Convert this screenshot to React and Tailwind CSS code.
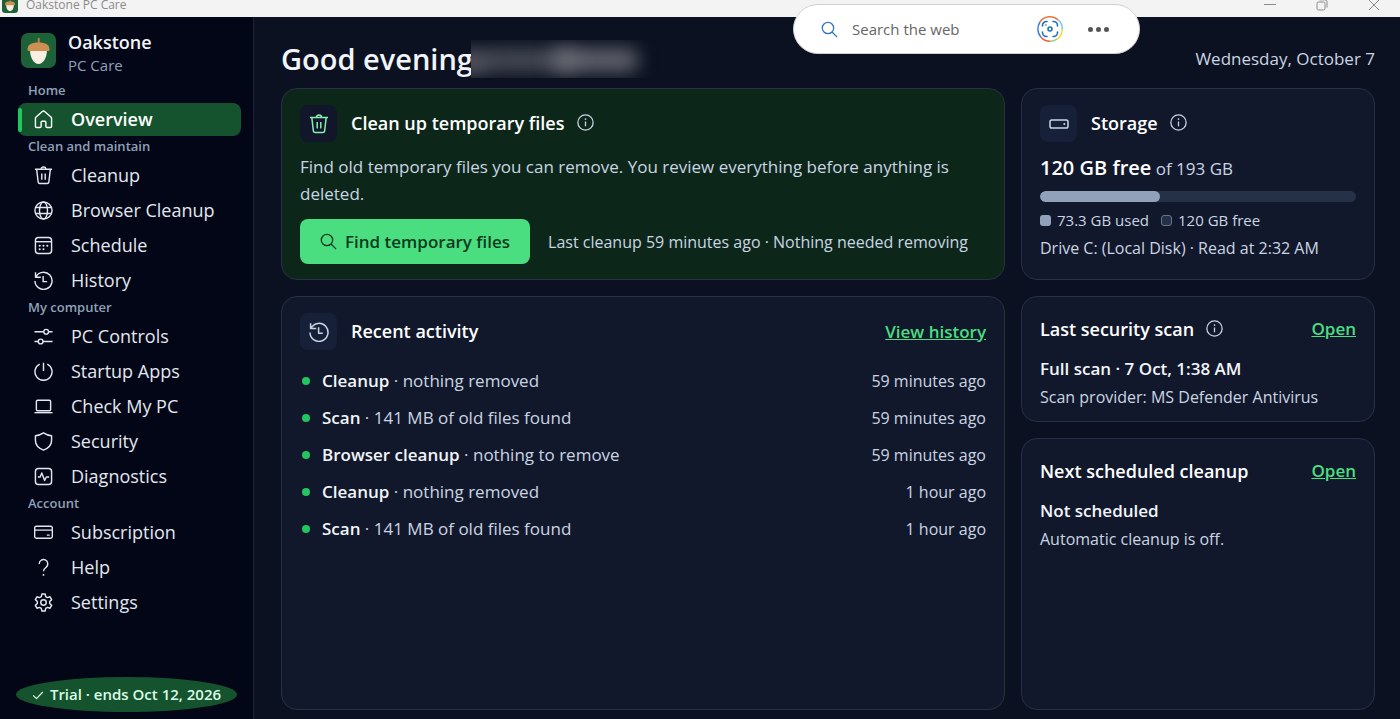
import clsx from 'clsx'

const NAV = [
  {
    label: 'Home',
    items: [{ name: 'Overview', icon: 'home', active: true }],
  },
  {
    label: 'Clean and maintain',
    items: [
      { name: 'Cleanup', icon: 'trash' },
      { name: 'Browser Cleanup', icon: 'globe' },
      { name: 'Schedule', icon: 'calendar' },
      { name: 'History', icon: 'history' },
    ],
  },
  {
    label: 'My computer',
    items: [
      { name: 'PC Controls', icon: 'sliders' },
      { name: 'Startup Apps', icon: 'power' },
      { name: 'Check My PC', icon: 'laptop' },
      { name: 'Security', icon: 'shield' },
      { name: 'Diagnostics', icon: 'pulse' },
    ],
  },
  {
    label: 'Account',
    items: [
      { name: 'Subscription', icon: 'card' },
      { name: 'Help', icon: 'help' },
      { name: 'Settings', icon: 'gear' },
    ],
  },
]

const ACTIVITY = [
  { kind: 'Cleanup', detail: 'nothing removed', when: '59 minutes ago' },
  { kind: 'Scan', detail: '141 MB of old files found', when: '59 minutes ago' },
  { kind: 'Browser cleanup', detail: 'nothing to remove', when: '59 minutes ago' },
  { kind: 'Cleanup', detail: 'nothing removed', when: '1 hour ago' },
  { kind: 'Scan', detail: '141 MB of old files found', when: '1 hour ago' },
]

const STORAGE = { used: 73.3, total: 193 }

// 20x20 outline icons
const ICONS = {
  home: <path d="M1.500 8.800a2 2 0 0 1 .7-1.500L8.800 1.600a1.800 1.800 0 0 1 2.400 0l6.600 5.700a2 2 0 0 1 .7 1.500v8.400a1.300 1.300 0 0 1-1.300 1.300h-3.400a1.300 1.300 0 0 1-1.300-1.300v-4.400a1 1 0 0 0-1-1h-3a1 1 0 0 0-1 1v4.400a1.300 1.300 0 0 1-1.300 1.300H2.800a1.300 1.300 0 0 1-1.300-1.300z" />,
  trash: (
    <>
      <path d="M1 3.500h18M7.500 3.300a2.500 2.300 0 0 1 5 0M2.800 3.500l1.600 13.600a1.700 1.700 0 0 0 1.700 1.400h7.800a1.700 1.700 0 0 0 1.700-1.400L17.200 3.500" />
      <path d="M8.200 8v6.500M11.800 8v6.500" />
    </>
  ),
  globe: (
    <>
      <circle cx="10" cy="10" r="9" />
      <ellipse cx="10" cy="10" rx="4.200" ry="9" />
      <path d="M1.700 6.800h16.600M1.700 13.200h16.600" />
    </>
  ),
  calendar: (
    <>
      <rect x="1.500" y="1.500" width="17" height="17" rx="3.200" />
      <path d="M1.500 6h17" />
      <path strokeWidth="2.200" strokeLinecap="round" d="M6 10.300h.01M10 10.300h.01M14 10.300h.01M6 14h.01M10 14h.01" />
    </>
  ),
  history: (
    <>
      <path d="M2 6.200A9 9 0 1 1 1 10.500M1.600 1.200v5.300h5.600" />
      <path d="M9.600 5.200v6h4.200" />
    </>
  ),
  sliders: (
    <>
      <circle cx="12.800" cy="5" r="2.500" />
      <circle cx="7" cy="15.300" r="2.500" />
      <path d="M.5 5h9.800M15.300 5h4.200M.5 15.300h4M9.500 15.300h10" />
    </>
  ),
  power: <path d="M10 .8v8.700M6 2.200a9 9 0 1 0 8 0" />,
  laptop: (
    <>
      <rect x="2.500" y="3.500" width="15" height="11" rx="1.300" />
      <path d="M.5 16.500h19" />
    </>
  ),
  shield: <path d="M10 1c2.500 1.800 5.300 2.700 8.500 2.900V9c0 4.800-3 8-8.500 10C4.500 17 1.500 13.800 1.500 9V3.900C4.700 3.700 7.500 2.800 10 1z" />,
  pulse: (
    <>
      <rect x="1.500" y="1.500" width="17" height="17" rx="3.200" />
      <path d="M4 10.500h2.500l1.700-4.300 3 8 1.800-3.700h3" />
    </>
  ),
  card: (
    <>
      <rect x=".7" y="3.500" width="18.600" height="12.500" rx="1.800" />
      <path d="M.7 7.500h18.600M13.500 12.800h3" />
    </>
  ),
  help: (
    <>
      <path d="M5.500 6.200a4.500 4.500 0 1 1 7.400 3.400c-1.700 1.400-2.900 2.300-2.900 4.400" />
      <path strokeWidth="2" strokeLinecap="round" d="M10 17.800h.01" />
    </>
  ),
  gear: (
    <>
      <path d="M8.300 1h3.400l.6 2.800 1.900 1.100 2.700-.9 1.700 3-2.100 1.900v2.200l2.100 1.900-1.700 3-2.700-.9-1.900 1.100-.6 2.800H8.300l-.6-2.800-1.900-1.100-2.700.9-1.700-3 2.100-1.900V8.900L1.400 7l1.700-3 2.700.9 1.900-1.100z" />
      <circle cx="10" cy="10" r="2.900" />
    </>
  ),
  drive: (
    <>
      <rect x="1" y="6" width="18" height="8" rx="1.800" />
      <path strokeWidth="2" strokeLinecap="round" d="M15.300 10h.01" />
    </>
  ),
  info: (
    <>
      <circle cx="10" cy="10" r="9" />
      <path d="M10 8.800V14.500" />
      <path strokeWidth="2" strokeLinecap="round" d="M10 6h.01" />
    </>
  ),
  search: (
    <>
      <circle cx="8.200" cy="8.200" r="6.700" />
      <path d="M13 13l6 6" />
    </>
  ),
  check: <path strokeWidth="2" d="M2 10.500 7.500 16 18 5" />,
}

function Icon({ name, className = 'size-5' }) {
  return (
    <svg
      viewBox="0 0 20 20"
      fill="none"
      stroke="currentColor"
      strokeWidth="1.500"
      strokeLinejoin="round"
      className={clsx('shrink-0', className)}
      aria-hidden="true"
    >
      {ICONS[name]}
    </svg>
  )
}

function Acorn({ className }) {
  return (
    <svg viewBox="0 0 35 35" className={clsx('shrink-0', className)} aria-hidden="true">
      <rect width="35" height="35" rx="7" fill="#1c6138" />
      <path d="M16.700 5h2v6h-2z" fill="#b9804a" />
      <path d="M9 16.500h17c0 8-3.500 14.500-8.500 14.500S9 24.500 9 16.500z" fill="#f6efe2" />
      <path d="M6.500 16.500c0-4.500 3.500-7 11-7s11 2.500 11 7c0 1-.7 1.500-1.700 1.500H8.200c-1 0-1.700-.5-1.700-1.500z" fill="#cd8f52" />
    </svg>
  )
}

function TitleBar() {
  return (
    <header className="flex h-[17px] items-end overflow-hidden bg-[#f3f3f3] text-[#8a8a8a]">
      <div className="flex h-6 flex-1 items-center gap-2 pl-0.5">
        <Acorn className="size-4" />
        <span className="text-[12px] leading-3">Oakstone PC Care</span>
      </div>
      <div className="flex h-6 items-center gap-10 pr-5">
        <button aria-label="Minimize">
          <svg viewBox="0 0 12 12" className="size-3" fill="none" stroke="currentColor"><path d="M0 5.500h12" /></svg>
        </button>
        <button aria-label="Restore">
          <svg viewBox="0 0 12 12" className="size-3" fill="none" stroke="currentColor">
            <rect x="1" y="3" width="8" height="8" rx="1.500" />
            <path d="M3.500.8h5.500a2 2 0 0 1 2 2v5.700" />
          </svg>
        </button>
        <button aria-label="Close">
          <svg viewBox="0 0 12 12" className="size-3" fill="none" stroke="currentColor"><path d="M1 1l10 10M11 1 1 11" /></svg>
        </button>
      </div>
    </header>
  )
}

function WebSearch() {
  return (
    <div className="absolute top-1 right-[260px] z-10 flex h-[50px] w-[347px] items-center rounded-full border border-[#d0d0d0] bg-white pr-7 pl-[27px]">
      <Icon name="search" className="size-[17px] text-[#2f74b5]" />
      <input
        type="text"
        aria-label="Search the web"
        placeholder="Search the web"
        className="ml-[14px] min-w-0 flex-1 text-[15px] text-[#333] outline-none placeholder:text-[#666]"
      />
      <button aria-label="Visual search" className="mr-[22px]">
        <svg viewBox="0 0 28 28" className="size-7" fill="none" strokeWidth="1.500">
          <path d="M4.800 22A12.300 12.300 0 0 1 4 7" stroke="#3b7de0" />
          <path d="M4 7A12.300 12.300 0 0 1 22 4.600" stroke="#e8743c" />
          <path d="M22 4.600A12.300 12.300 0 0 1 26.300 14" stroke="#7cc6e8" />
          <path d="M26.300 14A12.300 12.300 0 0 1 21 24.100" stroke="#f2d92e" />
          <path d="M21 24.100A12.300 12.300 0 0 1 14 26.300" stroke="#9bd08c" />
          <path d="M14 26.300A12.300 12.300 0 0 1 4.800 22" stroke="#e8613c" />
          <g stroke="#1f6fc4" strokeWidth="1.600" strokeLinecap="round">
            <path d="M6.500 11v-.5a4 4 0 0 1 4-4h.5M17 6.500h.5a4 4 0 0 1 4 4v.5M21.500 17v.5a4 4 0 0 1-4 4H17M11 21.500h-.5a4 4 0 0 1-4-4V17" />
            <circle cx="14" cy="14" r="2" />
            <path d="M10 10h.01" />
          </g>
        </svg>
      </button>
      <button aria-label="More options" className="flex gap-[3px] p-0.5">
        <span className="size-[5px] rounded-full bg-[#555]" />
        <span className="size-[5px] rounded-full bg-[#555]" />
        <span className="size-[5px] rounded-full bg-[#555]" />
      </button>
    </div>
  )
}

function NavItem({ item }) {
  return (
    <li className="py-px">
      <a
        href="#"
        aria-current={item.active ? 'page' : undefined}
        className={clsx(
          'flex h-[33px] items-center rounded-lg',
          item.active ? 'bg-[#14532d] font-semibold text-white' : 'text-slate-200'
        )}
      >
        <span className={clsx('h-6 w-1 rounded-full', item.active && 'bg-[#22c55e]')} />
        <Icon name={item.icon} className="ml-3 size-[19px]" />
        <span className="ml-[18px] text-[18px]">{item.name}</span>
      </a>
    </li>
  )
}

function Sidebar() {
  return (
    <aside className="flex w-[254px] shrink-0 flex-col border-r border-[#1c2233] bg-[#030616] pt-[7px] pr-3 pb-[7px] pl-[18px]">
      <div className="mb-1 flex h-[53px] items-center gap-3 pl-[3px]">
        <Acorn className="size-[35px]" />
        <div className="pt-1">
          <div className="text-[18px] leading-6 font-semibold text-slate-100">Oakstone</div>
          <div className="text-[15px] leading-[22px] text-slate-400">PC Care</div>
        </div>
      </div>
      <nav>
        {NAV.map((group) => (
          <div key={group.label}>
            <h2 className="pb-0.5 pl-[10px] text-[13px] leading-[19px] font-semibold text-slate-400">{group.label}</h2>
            <ul>
              {group.items.map((item) => (
                <NavItem key={item.name} item={item} />
              ))}
            </ul>
          </div>
        ))}
      </nav>
      <div className="mt-auto mr-1 -ml-0.5 flex h-[35px] items-center justify-center gap-1.5 rounded-[50%] bg-[#14532d] text-[15px] font-semibold text-green-100">
        <Icon name="check" className="size-3" />
        <span>Trial · ends Oct 12, 2026</span>
      </div>
    </aside>
  )
}

function Card({ className, children }) {
  return (
    <section className={clsx('rounded-2xl border border-[#273044] px-[18px]', className)}>{children}</section>
  )
}

function IconTile({ name, className }) {
  return (
    <span className={clsx('flex size-[37px] items-center justify-center rounded-lg', className)}>
      <Icon name={name} />
    </span>
  )
}

function InfoButton({ label }) {
  return (
    <button aria-label={label} className="ml-3 pb-0.5 text-slate-300">
      <Icon name="info" className="size-[17px]" />
    </button>
  )
}

function CleanupCard() {
  return (
    <Card className="bg-[#0c271a] pt-4">
      <div className="flex items-center">
        <IconTile name="trash" className="bg-[#11162b] text-[#86efac]" />
        <h2 className="ml-[14px] text-[18px] font-semibold text-white">Clean up temporary files</h2>
        <InfoButton label="About temporary files" />
      </div>
      <p className="mt-[11px] text-[17px] leading-[27px] text-slate-300">
        Find old temporary files you can remove. You review everything before anything is deleted.
      </p>
      <div className="mt-3 flex items-center gap-[18px]">
        <button className="flex h-[45px] items-center gap-2 rounded-lg bg-[#4ade80] px-5 text-[17px] font-semibold text-[#0c3a1e]">
          <Icon name="search" className="size-[17px]" />
          Find temporary files
        </button>
        <p className="text-[16px] text-slate-300">Last cleanup 59 minutes ago · Nothing needed removing</p>
      </div>
    </Card>
  )
}

function StorageCard() {
  const { used, total } = STORAGE
  return (
    <Card className="bg-[#12182b] pt-4">
      <div className="flex items-center">
        <IconTile name="drive" className="bg-[#162038] text-slate-300" />
        <h2 className="ml-[14px] text-[18px] font-semibold text-white">Storage</h2>
        <InfoButton label="About storage" />
      </div>
      <p className="mt-3 text-[17px] leading-7 text-slate-300">
        <strong className="text-[20px] font-semibold text-white">120 GB free</strong> of 193 GB
      </p>
      <div className="mt-2 h-[11px] overflow-hidden rounded-full bg-[#253147]">
        <div className="h-full rounded-full bg-slate-400" style={{ width: `${(used / total) * 100}%` }} />
      </div>
      <div className="mt-2 flex gap-3 text-[15px] leading-5 text-slate-300">
        <span className="flex items-center gap-1.5">
          <span className="size-[11px] rounded-[3px] bg-slate-400" />
          {used} GB used
        </span>
        <span className="flex items-center gap-1.5">
          <span className="size-[11px] rounded-[3px] border border-slate-500 bg-[#253147]" />
          120 GB free
        </span>
      </div>
      <p className="mt-2 text-[16px] leading-5 text-slate-300">Drive C: (Local Disk) · Read at 2:32 AM</p>
    </Card>
  )
}

function ActivityCard() {
  return (
    <Card className="row-span-2 bg-[#12182b] pt-4">
      <div className="flex items-center">
        <IconTile name="history" className="bg-[#162038] text-slate-300" />
        <h2 className="ml-[14px] flex-1 text-[18px] font-semibold text-white">Recent activity</h2>
        <a href="#" className="text-[17px] font-semibold text-[#4ade80] underline">View history</a>
      </div>
      <ul className="mt-3">
        {ACTIVITY.map((row, i) => (
          <li key={i} className="flex h-[37px] items-center text-[17px] text-slate-300">
            <span className="mr-3 ml-0.5 size-2 rounded-full bg-[#22c55e]" />
            <span className="flex-1">
              <strong className="font-semibold text-slate-100">{row.kind}</strong> · {row.detail}
            </span>
            <time className="text-[16px]">{row.when}</time>
          </li>
        ))}
      </ul>
    </Card>
  )
}

function SummaryCard({ title, info, status, note }) {
  return (
    <Card className="bg-[#12182b] pt-[18px] pb-[10px]">
      <div className="flex items-center">
        <h2 className="text-[18px] leading-7 font-semibold text-white">{title}</h2>
        {info && <InfoButton label={`About ${title.toLowerCase()}`} />}
        <a href="#" className="ml-auto text-[17px] leading-7 font-semibold text-[#4ade80] underline">Open</a>
      </div>
      <p className="mt-3 text-[17px] leading-7 font-semibold text-slate-100">{status}</p>
      <p className="text-[16px] leading-7 text-slate-300">{note}</p>
    </Card>
  )
}

export default function App() {
  return (
    <div className="relative flex min-h-screen flex-col bg-[#0b1120] font-['Open_Sans','Noto_Sans',sans-serif]">
      <TitleBar />
      <WebSearch />
      <div className="flex flex-1">
        <Sidebar />
        <main className="flex min-w-0 flex-1 flex-col pr-[25px] pb-[9px] pl-[27px]">
          <div className="flex h-[71px] items-center pt-3">
            <h1 className="text-[29px] font-semibold text-slate-100">Good evening</h1>
            {/* user name, hidden for privacy */}
            <div className="relative -ml-0.5 h-[38px] w-[190px] overflow-hidden bg-[#0b1120]">
              <div className="absolute top-2 -left-5 h-7 w-10 rounded-full bg-[#77777f]/60 blur-[8px]" />
              <div className="absolute top-2 left-3 h-6 w-24 rounded-full bg-[#6c6f78]/60 blur-[9px]" />
              <div className="absolute top-2 left-20 h-6 w-22 rounded-full bg-[#77777f]/80 blur-[9px]" />
            </div>
            <p className="ml-auto text-[17px] text-slate-300">Wednesday, October 7</p>
          </div>
          <div className="grid flex-1 grid-cols-[724fr_354fr] grid-rows-[192px_auto_1fr] gap-4">
            <CleanupCard />
            <StorageCard />
            <ActivityCard />
            <SummaryCard
              title="Last security scan"
              info
              status="Full scan · 7 Oct, 1:38 AM"
              note="Scan provider: MS Defender Antivirus"
            />
            <SummaryCard title="Next scheduled cleanup" status="Not scheduled" note="Automatic cleanup is off." />
          </div>
        </main>
      </div>
    </div>
  )
}
